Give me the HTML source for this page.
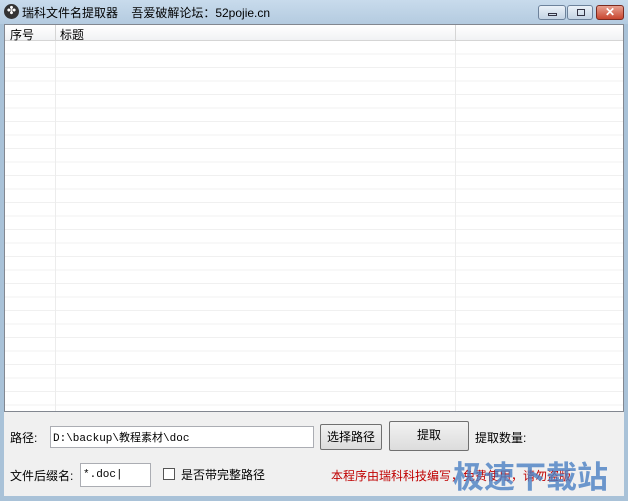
<!DOCTYPE html>
<html><head><meta charset="utf-8"><style>
*{margin:0;padding:0;box-sizing:border-box}
body{width:628px;height:501px;overflow:hidden;background:#a9c2d8;font-family:"Liberation Sans","Noto Sans CJK SC",sans-serif;font-size:12px;position:relative}
.title{position:absolute;left:0;top:0;width:628px;height:24px;background:linear-gradient(#c8dbec,#b4cbe0)}
.title .t{position:absolute;left:22px;top:4px;color:#000;font-size:12px}
.icon{position:absolute;left:4px;top:4px;width:15px;height:15px;border-radius:50%;background:#333;color:#fff;font-size:11px;line-height:15px;text-align:center}
.btn{position:absolute;top:5px;height:15px;border:1px solid #6d829b;border-radius:3px;background:linear-gradient(#eaf1f8,#c3d3e4)}
.list{position:absolute;left:4px;top:24px;width:620px;height:388px;background:#fff;border:1px solid #828790;overflow:hidden}
.hdr{position:absolute;left:0;top:0;width:100%;height:16px;background:linear-gradient(#fff,#f1f2f4);border-bottom:1px solid #d5d5d5}
.hdr span{position:absolute;top:1px;font-size:12px}
.rows{position:absolute;left:0;top:16px;width:100%;height:380px;background:repeating-linear-gradient(#fff 0 12.5px,#f0f0f0 12.5px 13.5px)}
.vl{position:absolute;top:0;width:1px;height:100%;background:#ececec}
.panel{position:absolute;left:4px;top:412px;width:620px;height:84px;background:#f0f0f0}
.lbl{position:absolute;font-size:12px}
.inp{position:absolute;background:#fff;border:1px solid #abadb3;font-family:"Liberation Mono","Noto Sans CJK SC",monospace;font-size:11px;padding:2px 2px}
.pb{position:absolute;border:1px solid #707070;border-radius:2px;background:linear-gradient(#f2f2f2,#dcdcdc);text-align:center;font-size:12px}
</style></head><body>
<div class="title"><div class="icon">✤</div><div class="t">瑞科文件名提取器 &nbsp;&nbsp;&nbsp;吾爱破解论坛：52pojie.cn</div>
<div class="btn" style="left:538px;width:28px"><div style="position:absolute;left:9px;top:7px;width:9px;height:3px;border:1px solid #334"></div></div>
<div class="btn" style="left:567px;width:26px"><div style="position:absolute;left:9px;top:3px;width:8px;height:7px;border:1px solid #334"></div></div>
<div class="btn" style="left:596px;width:28px;background:linear-gradient(#e8a090,#c8452f);border-color:#7a2a20;color:#fff;font-weight:bold;text-align:center;line-height:13px;font-size:12px">✕</div>
</div>
<div class="list">
<div class="rows"><div class="vl" style="left:50px"></div><div class="vl" style="left:450px"></div></div>
<div class="hdr"><span style="left:5px">序号</span><span style="left:55px">标题</span>
<div style="position:absolute;left:50px;top:0;width:1px;height:16px;background:#d5d5d5"></div>
<div style="position:absolute;left:450px;top:0;width:1px;height:16px;background:#d5d5d5"></div></div>
</div>
<div class="panel">
<div class="lbl" style="left:6px;top:17px">路径:</div>
<div class="inp" style="left:46px;top:14px;width:264px;height:22px">D:\backup\教程素材\doc</div>
<div class="pb" style="left:316px;top:12px;width:62px;height:26px;line-height:24px">选择路径</div>
<div class="pb" style="left:385px;top:9px;width:80px;height:30px;line-height:26px">提取</div>
<div class="lbl" style="left:471px;top:17px">提取数量:</div>
<div class="lbl" style="left:6px;top:55px">文件后缀名:</div>
<div class="inp" style="left:76px;top:51px;width:71px;height:24px;line-height:18px">*.doc|</div>
<div style="position:absolute;left:159px;top:56px;width:12px;height:12px;border:1px solid #555;background:#fff"></div>
<div class="lbl" style="left:177px;top:54px">是否带完整路径</div>
<div class="lbl" style="left:327px;top:55px;color:#c00000">本程序由瑞科科技编写，免费使用，请勿盗版</div>
<div style="position:absolute;left:449px;top:40px;font-size:31px;font-weight:bold;color:#4a80c4;opacity:.8">极速下载站</div>
</div>
</body></html>
